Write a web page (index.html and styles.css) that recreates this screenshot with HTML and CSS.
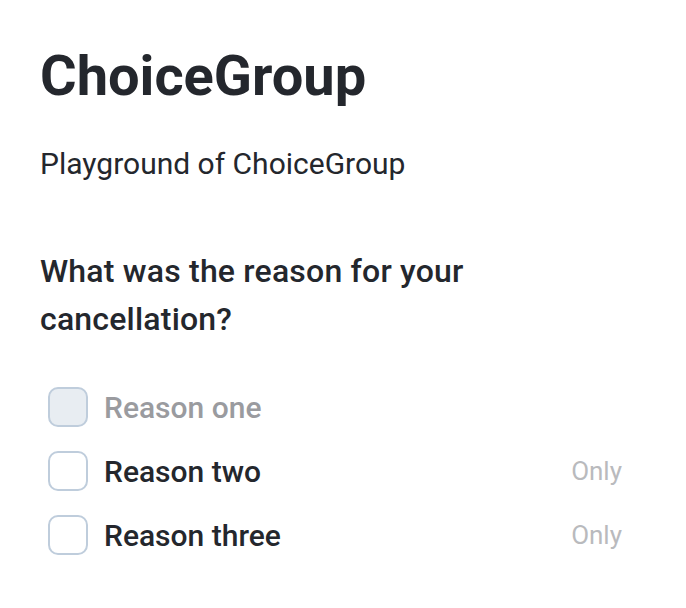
FILE: index.html
```html
<!DOCTYPE html>
<html>
<head>
<meta charset="utf-8">
<link rel="stylesheet" href="styles.css">
</head>
<body>
<main class="page">
  <h1 class="title">ChoiceGroup</h1>
  <p class="subtitle">Playground of ChoiceGroup</p>
  <fieldset class="group">
    <legend class="question">What was the reason for your cancellation?</legend>
    <div class="options">
      <label class="option disabled">
        <span class="box"></span>
        <span class="label">Reason one</span>
      </label>
      <label class="option">
        <span class="box"></span>
        <span class="label">Reason two</span>
        <span class="only">Only</span>
      </label>
      <label class="option">
        <span class="box"></span>
        <span class="label">Reason three</span>
        <span class="only">Only</span>
      </label>
    </div>
  </fieldset>
</main>
</body>
</html>
```

FILE: styles.css
```css
html, body {
  margin: 0;
  padding: 0;
  background: #ffffff;
}
body {
  font-family: Roboto, "Liberation Sans", sans-serif;
  color: #24272d;
}
.page {
  padding: 40px 64px 40px 40px;
}
.title {
  margin: 0;
  font-size: 56px;
  font-weight: 700;
  line-height: 72px;
}
.subtitle {
  margin: 32px 0 0;
  font-size: 30px;
  font-weight: 400;
  line-height: 40px;
}
.group {
  border: 0;
  padding: 0;
  margin: 63px 0 0;
  min-width: 0;
}
.question {
  padding: 0;
  font-size: 32px;
  font-weight: 500;
  line-height: 48px;
  letter-spacing: 0.2px;
  max-width: 480px;
}
.options {
  margin-top: 44px;
  display: flex;
  flex-direction: column;
  gap: 24px;
}
.option {
  display: flex;
  align-items: center;
  height: 40px;
}
.box {
  box-sizing: border-box;
  width: 40px;
  height: 40px;
  border: 2px solid #bfcddc;
  border-radius: 10px;
  margin-left: 8px;
  background: #fff;
  flex: none;
}
.label {
  margin-left: 16px;
  font-size: 30px;
  font-weight: 500;
  flex: 1;
}
.disabled .box {
  background: #e8edf2;
}
.disabled .label {
  color: #9a9b9f;
}
.only {
  font-size: 26px;
  color: #b9babd;
}
```
